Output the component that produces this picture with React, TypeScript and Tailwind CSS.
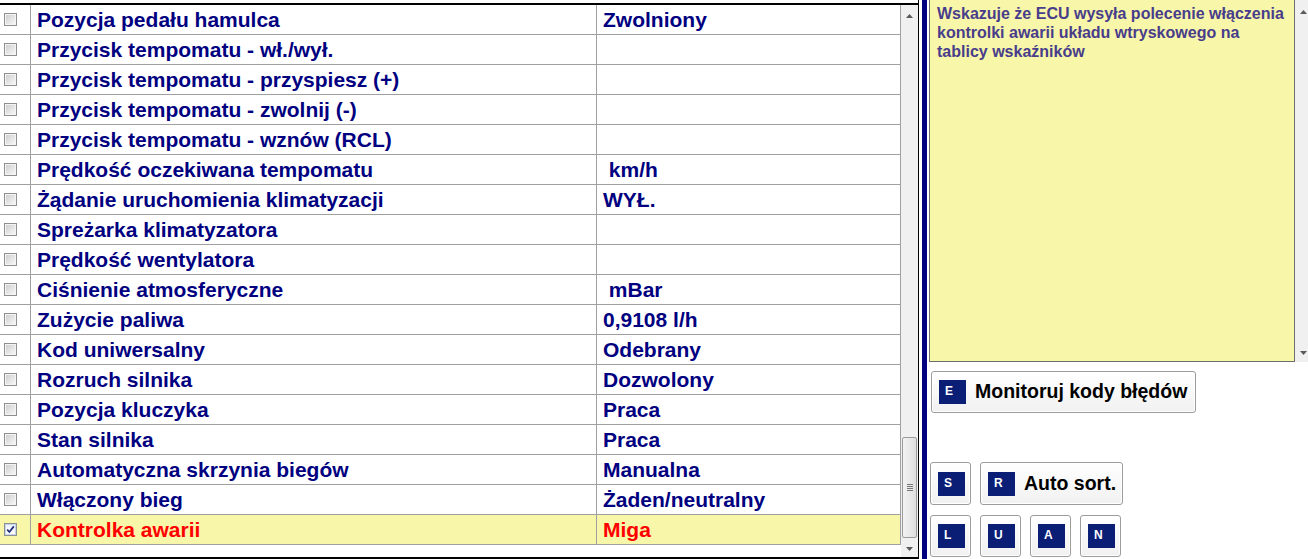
import React from "react";

const rows: [string, string][] = [
  ["Pozycja pedału hamulca", "Zwolniony"],
  ["Przycisk tempomatu - wł./wył.", ""],
  ["Przycisk tempomatu - przyspiesz (+)", ""],
  ["Przycisk tempomatu - zwolnij (-)", ""],
  ["Przycisk tempomatu - wznów (RCL)", ""],
  ["Prędkość oczekiwana tempomatu", " km/h"],
  ["Żądanie uruchomienia klimatyzacji", "WYŁ."],
  ["Spreżarka klimatyzatora", ""],
  ["Prędkość wentylatora", ""],
  ["Ciśnienie atmosferyczne", " mBar"],
  ["Zużycie paliwa", "0,9108 l/h"],
  ["Kod uniwersalny", "Odebrany"],
  ["Rozruch silnika", "Dozwolony"],
  ["Pozycja kluczyka", "Praca"],
  ["Stan silnika", "Praca"],
  ["Automatyczna skrzynia biegów", "Manualna"],
  ["Włączony bieg", "Żaden/neutralny"],
];

function Checkbox({ checked }: { checked?: boolean }) {
  if (checked) {
    return (
      <div className="w-[13px] h-[13px] border border-[#8e8f8f] bg-white flex items-center justify-center">
        <div className="w-[11px] h-[11px] border border-[#c6d3ee] bg-linear-to-b from-[#eef2fb] to-[#ffffff] flex items-center justify-center">
          <svg width="9" height="9" viewBox="0 0 9 9">
            <path d="M1.2 4.6 L3.4 7 L7.8 1.4" stroke="#1d2a7a" strokeWidth="1.7" fill="none" />
          </svg>
        </div>
      </div>
    );
  }
  return (
    <div className="w-[13px] h-[13px] border border-[#8e8f8f] bg-[#f4f4f4] p-[1px]">
      <div className="w-full h-full bg-linear-to-br from-[#cfcfcf] to-[#f7f7f7]" />
    </div>
  );
}

function ArrowUp() {
  return (
    <svg width="7" height="4" viewBox="0 0 7 4">
      <polygon points="0,4 7,4 3.5,0" fill="#5a5a5a" />
    </svg>
  );
}
function ArrowDown() {
  return (
    <svg width="7" height="4" viewBox="0 0 7 4">
      <polygon points="0,0 7,0 3.5,4" fill="#5a5a5a" />
    </svg>
  );
}

function Row({ label, value, last }: { label: string; value: string; last?: boolean }) {
  const color = last ? "text-[#ff0000]" : "text-[#000080]";
  return (
    <div className={`flex h-[30px] border-b border-[#a0a0a0] ${last ? "bg-[#f8f6a8]" : "bg-white"}`}>
      <div className="w-[31px] border-r border-[#a0a0a0] flex items-center pl-[4px]">
        <Checkbox checked={last} />
      </div>
      <div className={`w-[566px] border-r border-[#a0a0a0] flex items-center pl-[6px] text-[21px] font-bold ${color} whitespace-pre`}>
        {label}
      </div>
      <div className={`w-[304px] border-r border-[#a0a0a0] flex items-center pl-[6px] text-[21px] font-bold ${color} whitespace-pre`}>
        {value}
      </div>
    </div>
  );
}

function Badge({ letter }: { letter: string }) {
  return (
    <div className="w-[27px] h-[24px] bg-[#0a1e76] text-white text-[12px] font-bold leading-none pl-[6px] pt-[5px] shrink-0">
      {letter}
    </div>
  );
}

function Btn({ letter, label, w, h }: { letter: string; label?: string; w: string; h: string }) {
  return (
    <div
      className={`${w} ${h} border border-[#9c9c9c] rounded-[3px] bg-linear-to-b from-[#ffffff] to-[#f1f1f1] shadow-[inset_0_0_0_1px_#ffffff] flex items-center pl-[7px] shrink-0`}
    >
      <Badge letter={letter} />
      {label && <span className="ml-[9px] text-[19.5px] font-bold text-black whitespace-nowrap">{label}</span>}
    </div>
  );
}

export default function App() {
  return (
    <div className="w-[1308px] h-[559px] overflow-hidden bg-white flex font-['Liberation_Sans',Arial,sans-serif]">
      {/* Left panel */}
      <div className="w-[918px] h-full pt-[3px] shrink-0">
        <div className="h-[556px] border-t-2 border-b-2 border-black flex">
          <div className="w-[901px] flex flex-col">
            {rows.map(([l, v]) => (
              <Row key={l} label={l} value={v} />
            ))}
            <Row label="Kontrolka awarii" value="Miga" last />
          </div>
          {/* scrollbar */}
          <div className="w-[17px] bg-[#f0f0f0] flex flex-col">
            <div className="h-[14px] flex items-end justify-center pb-[1px]">
              <ArrowUp />
            </div>
            <div className="flex-1 flex flex-col justify-end items-center pb-[2px]">
              <div className="w-[15px] h-[101px] border border-[#9b9b9b] rounded-[2px] bg-linear-to-r from-[#f3f3f3] to-[#dedede] flex flex-col items-center justify-center gap-[1px]">
                <div className="w-[6px] h-[1px] bg-[#777]" />
                <div className="w-[6px] h-[1px] bg-[#777]" />
                <div className="w-[6px] h-[1px] bg-[#777]" />
                <div className="w-[6px] h-[1px] bg-[#777]" />
              </div>
            </div>
            <div className="h-[17px] flex items-center justify-center">
              <ArrowDown />
            </div>
          </div>
        </div>
      </div>
      <div className="w-[1px] h-full bg-black shrink-0" />
      <div className="w-[3px] h-full shrink-0" />
      <div className="w-[5px] h-full bg-[#000080] shrink-0" />
      <div className="w-[2px] h-full shrink-0" />

      {/* Right panel */}
      <div className="w-[379px] h-full overflow-hidden flex flex-col shrink-0">
        <div className="flex h-[362px] w-[390px] shrink-0">
          <div className="w-[366px] h-full border-l border-r border-b border-[#6e6e6e] bg-[#f8f6a8] pl-[7px] pt-[4px] pr-[1px] text-[16px] leading-[19px] font-bold text-[#483d8b]">
            Wskazuje że ECU wysyła polecenie włączenia kontrolki awarii układu wtryskowego na tablicy wskaźników
          </div>
          <div className="w-[17px] h-full bg-[#f0f0f0] flex flex-col justify-between items-center pt-[10px] pb-[7px]">
            <ArrowUp />
            <ArrowDown />
          </div>
        </div>
        <div className="mt-[9px] ml-[2px]">
          <Btn letter="E" label="Monitoruj kody błędów" w="w-[265px]" h="h-[42px]" />
        </div>
        <div className="mt-[49px] ml-[1px] flex gap-[9px]">
          <Btn letter="S" w="w-[41px]" h="h-[43px]" />
          <Btn letter="R" label="Auto sort." w="w-[143px]" h="h-[43px]" />
        </div>
        <div className="mt-[10px] ml-[1px] flex gap-[9px]">
          <Btn letter="L" w="w-[41px]" h="h-[42px]" />
          <Btn letter="U" w="w-[41px]" h="h-[42px]" />
          <Btn letter="A" w="w-[41px]" h="h-[42px]" />
          <Btn letter="N" w="w-[41px]" h="h-[42px]" />
        </div>
      </div>
    </div>
  );
}
